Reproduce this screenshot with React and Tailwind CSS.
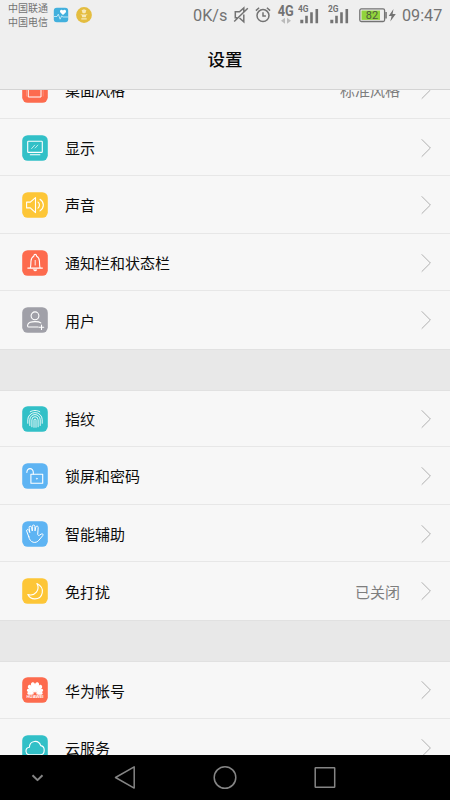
const tiles = {
  red: 'text-[#fd6b4e]',
  teal: 'text-[#32c0c7]',
  yellow: 'text-[#fdc637]',
  blue: 'text-[#5eb4f3]',
  gray: 'text-[#a0a0a8]',
}

function Tile({ color, children }) {
  return (
    <svg viewBox="0 0 26 26" className={`w-[26px] h-[26px] shrink-0 ${tiles[color]}`}>
      <rect x=".2" y=".2" width="25.6" height="25.6" rx="5.5" fill="currentColor" />
      <g fill="none" stroke="#fff" strokeWidth="1.1" strokeLinecap="round" strokeLinejoin="round">
        {children}
      </g>
    </svg>
  )
}

// teardrop pointing at the centre of the flower
function Petal({ angle, scale }) {
  return (
    <path
      d="M0-1.200C-1.500-4.500-2.500-8-1.800-10.200C-1.200-11.900 1.200-11.900 1.800-10.200C2.500-8 1.500-4.500 0-1.200z"
      transform={`translate(13 17) rotate(${angle}) scale(${scale})`}
    />
  )
}

const petals = [
  [-84, 0.68], [-60, 0.8], [-36, 0.95], [-12, 1.05],
  [12, 1.05], [36, 0.95], [60, 0.8], [84, 0.68],
]

const icons = {
  theme: (
    <Tile color="red">
      <rect x="6.7" y="6" width="12.3" height="14" strokeWidth="1" />
      <path d="M4.500 19V8M21.200 19V8" strokeWidth=".4" opacity=".6" />
    </Tile>
  ),
  display: (
    <Tile color="teal">
      <rect x="5.7" y="6.2" width="14.6" height="11.2" rx=".7" />
      <path d="M8.3 19.7h9.6" />
      <path d="M9.6 13.6l3-3.4M13.2 13l2.6-2.9" strokeWidth=".7" />
    </Tile>
  ),
  sound: (
    <Tile color="yellow">
      <path d="M4.6 10.1h3.7l5.2-4.5v15l-5.2-4.7H4.6z" />
      <path d="M16 10.1c1.9 1.4 1.9 4.6 0 6M18 7.3c4.5 3.1 4.5 8.5 0 11.6" />
    </Tile>
  ),
  bell: (
    <Tile color="red">
      <path d="M5.800 18.100h14.600M8.300 17.900c.8-2 .4-4.700.7-6.900.2-2.300 1.200-4 2.800-4.700.1-2.600 2.700-2.600 2.800 0 1.600.7 2.600 2.400 2.800 4.700.3 2.200-.1 4.900.7 6.900" />
      <path d="M13.2 10.4v4.7" strokeWidth=".9" />
      <path d="M11.4 19.6h3.6c-.3 2-3.3 2-3.6 0z" fill="#fff" strokeWidth=".3" />
    </Tile>
  ),
  user: (
    <Tile color="gray">
      <circle cx="13" cy="8.8" r="3.9" />
      <path d="M16.2 20H6.6c-1.3 0-1.1-1.8-.7-2.7.9-2.2 3-2.7 7.1-2.7 3 0 4.7.3 5.8 1.3M19.5 18.1v4.4M17.3 20.3h4.4" />
    </Tile>
  ),
  fingerprint: (
    <Tile color="teal">
      <g strokeWidth=".9">
        <path d="M8.200 5.800c2.800-1.800 6.800-1.800 9.600 0" />
        <path d="M5.800 17.300v-3.500a7.200 7.200 0 0 1 14.400 0v3.500" />
        <path d="M7.800 19.500v-5.700a5.200 5.200 0 0 1 10.400 0v5.700" />
        <path d="M9.900 20.800v-7a3.100 3.100 0 0 1 6.200 0v7" />
        <path d="M12 21.300v-7.200a1 1 0 0 1 2 0v7.200" />
      </g>
    </Tile>
  ),
  lock: (
    <Tile color="blue">
      <rect x="8.9" y="11.2" width="11.8" height="9.1" />
      <path d="M4.9 9.4c-.3-5 6.5-5 6.4 0v1.5" />
      <circle cx="14.8" cy="15.7" r=".5" fill="#fff" strokeWidth=".5" />
    </Tile>
  ),
  hand: (
    <Tile color="blue">
      <path d="M6.800 15.800L4.700 10.200c-.6-1.800 1.500-2.500 2.200-.9l.9 2.300L7.100 6.600c-.2-1.700 2-2 2.500-.3l.7 3.700V5.400c0-1.800 2.500-1.800 2.600 0l.1 4.500.8-3.800c.4-1.600 2.600-1.200 2.400.4l-.5 6.900c.5 1.300 1.200 1.400 2 .7l1.400-1c1.500-.9 2.700.5 1.600 1.600l-3.700 4.400c-2.900 4-9.300 2.900-10.200-3.300z" strokeWidth="1" />
    </Tile>
  ),
  moon: (
    <Tile color="yellow">
      <path d="M14.900 5.5c9 4.4 6 15.5-2.2 15.4-3.1 0-5.600-1.800-6.900-4.400 7.400 2.200 12.500-4.800 9.100-11z" />
    </Tile>
  ),
  huawei: (
    <Tile color="red">
      <g fill="#fff" stroke="none">
        {petals.map(([angle, scale]) => <Petal key={angle} angle={angle} scale={scale} />)}
      </g>
      <text x="13" y="21.100" textAnchor="middle" textLength="17" lengthAdjust="spacingAndGlyphs" fontSize="3.200" fontWeight="700" fill="#fff" stroke="none" fontFamily="Liberation Sans, sans-serif">HUAWEI</text>
    </Tile>
  ),
  cloud: (
    <Tile color="teal">
      <path d="M8 19.800c-5.200 0-5.300-6.900-.6-7.500.2-7.100 9.300-7.900 11.300-1.700 4.700.6 4.800 9.200-.7 9.200z" />
    </Tile>
  ),
}

function Row({ icon, label, value, className = 'h-[57px] pt-px' }) {
  return (
    <div className={`flex shrink-0 items-center border-b border-[#e7e7e7] bg-[#f7f7f7] pl-[22px] pr-[18px] ${className}`}>
      {icons[icon]}
      <span className="ml-[17px] flex-1 pt-px text-[15px] leading-5 text-[#0c0c0c]">{label}</span>
      {value && <span className="mr-5 pt-px text-[15px] leading-5 text-[#7e7e7e]">{value}</span>}
      <svg viewBox="0 0 12 20" className="h-5 w-3" fill="none" stroke="#b0b0b0" strokeWidth="1">
        <path d="M1.700 1.300l8.700 8.700-8.700 8.700" />
      </svg>
    </div>
  )
}

function Gap() {
  return <div className="h-[42px] shrink-0 border-y border-[#e1e1e1] bg-[#e8e8e8]" />
}

function Signal({ label }) {
  return (
    <svg viewBox="0 0 22 22" className="h-[22px] w-[22px]" fill="#737373">
      <text x="0" y="7.500" fontSize="8.400" fontWeight="700" fontFamily="Roboto, sans-serif">{label}</text>
      <path d="M2.300 15.700h3v3.600h-3zM7.200 11.800h2.600v7.500H7.200zM12.200 8.300h2.600v11h-2.600zM17.500 5h2.600v14.300h-2.600z" />
    </svg>
  )
}

function StatusBar() {
  return (
    <div className="flex h-[30px] items-center pl-2 font-[Roboto,sans-serif] text-[#737373]">
      <div className="w-10 font-['Noto_Sans_CJK_SC',sans-serif] text-[10px] leading-[14px]">
        <div>中国联通</div>
        <div>中国电信</div>
      </div>
      <svg viewBox="0 0 16 16" className="ml-[5px] h-4 w-4">
        <rect x=".8" y=".8" width="14.400" height="14.400" rx="3" fill="#42b0dd" />
        <path d="M10 8L7.400 5.400C6 3.500 8.600 1.500 10 3.500c1.400-2 4-.1 2.700 1.900z" fill="#fff" />
        <path d="M1 9.500h3l1.300-2.300 1.800 5 1.600-3.400 1 1.200H15" fill="none" stroke="#d5f1fb" strokeWidth=".8" />
      </svg>
      <svg viewBox="0 0 16 16" className="ml-[7px] h-4 w-4">
        <circle cx="8" cy="8" r="7.900" fill="#e4bd40" />
        <path d="M5.500 3.300L8 2.200l2.500 1.100-.6.700v1.500L8 6.500 6.100 5.500V4zM4.300 7.200l2 .3h3.400l2-.3-1.600 1.400-.2 1.700H6.100l-.2-1.700zM5.300 11.300h5.400v1.200H5.300z" fill="#f8edc7" opacity=".9" />
      </svg>
      <span className="ml-[101px] w-[36px] pt-[2px] text-[16.300px]">0K/s</span>
      <svg viewBox="0 0 16 18" className="ml-[4px] h-[18px] w-4" fill="none" stroke="#737373" strokeWidth="1.500">
        <path d="M10.800 6V2L6.500 5.800H2.300v6h2M6.500 12l4.300 3.800V8.500M1.200 15.500L14.800 2.300" />
      </svg>
      <svg viewBox="0 0 16 18" className="ml-[6px] h-[18px] w-4" fill="none" stroke="#737373" strokeWidth="1.500">
        <circle cx="8" cy="9.600" r="6" />
        <path d="M8 6.200v3.700h2.900M.9 4.600l3.200-2.800M15.100 4.600l-3.200-2.800" />
      </svg>
      <svg viewBox="0 0 18 22" className="ml-[6px] h-[22px] w-[18px]" fill="#737373">
        <text x=".8" y="11.900" fontSize="14.300" fontWeight="700" textLength="16" lengthAdjust="spacingAndGlyphs">4G</text>
        <path d="M8 13.700v6L4 16.700zM10 13.700v6l4-3z" fill="#bbb" />
      </svg>
      <div className="ml-[3px]"><Signal label="4G" /></div>
      <div className="ml-[8px]"><Signal label="2G" /></div>
      <svg viewBox="0 0 38 16" className="ml-[9px] h-4 w-[38px]">
        <rect x=".8" y="1.900" width="24.800" height="12.600" rx="1.500" fill="none" stroke="#737373" strokeWidth="1.300" />
        <path d="M26.300 5h1.500v6.400h-1.500" fill="#737373" />
        <rect x="2.500" y="3.500" width="18.500" height="9.400" fill="#91d43b" />
        <text x="12.900" y="12.200" textAnchor="middle" fontSize="11" fill="#4d5c3c">82</text>
        <path d="M34.500 2L29.700 9h2.900l-1.300 5.500 5.500-7.500h-3.200z" fill="#737373" />
      </svg>
      <span className="ml-[5px] pt-[2px] text-[16.200px]">09:47</span>
    </div>
  )
}

function NavBar() {
  return (
    <div className="flex h-[45px] items-center bg-black">
      <svg viewBox="0 0 450 45" className="h-[45px] w-[450px]" fill="none" stroke="#858585" strokeWidth="1.500" strokeLinejoin="round">
        <path d="M32.500 20.200l5 4.900 5-4.900" strokeWidth="2" />
        <path d="M134.200 11.900v21.200l-18.700-10.600z" />
        <circle cx="225" cy="22.500" r="10.800" />
        <rect x="315.200" y="12.700" width="19.500" height="19.500" rx=".5" />
      </svg>
    </div>
  )
}

export default function App() {
  return (
    <div className="flex h-[800px] w-[450px] flex-col overflow-hidden bg-[#f7f7f7] font-['Noto_Sans_CJK_SC',sans-serif]">
      <header className="h-[90px] shrink-0 border-b border-[#d4d4d4] bg-[#efefef]">
        <StatusBar />
        <h1 className="flex h-[59px] items-center justify-center text-[17.500px] font-medium text-[#0a0a0a]">设置</h1>
      </header>
      <main className="flex h-[665px] shrink-0 flex-col overflow-hidden">
        <Row icon="theme" label="桌面风格" value="标准风格" className="-mt-[29px] h-[58px]" />
        <Row icon="display" label="显示" />
        <Row icon="sound" label="声音" className="h-[58px]" />
        <Row icon="bell" label="通知栏和状态栏" />
        <Row icon="user" label="用户" className="h-[58px] border-b-0" />
        <Gap />
        <Row icon="fingerprint" label="指纹" className="h-[56px]" />
        <Row icon="lock" label="锁屏和密码" className="h-[58px]" />
        <Row icon="hand" label="智能辅助" />
        <Row icon="moon" label="免打扰" value="已关闭" className="h-[58px] border-b-0" />
        <Gap />
        <Row icon="huawei" label="华为帐号" className="h-[57px]" />
        <Row icon="cloud" label="云服务" className="h-[58px]" />
      </main>
      <NavBar />
    </div>
  )
}
